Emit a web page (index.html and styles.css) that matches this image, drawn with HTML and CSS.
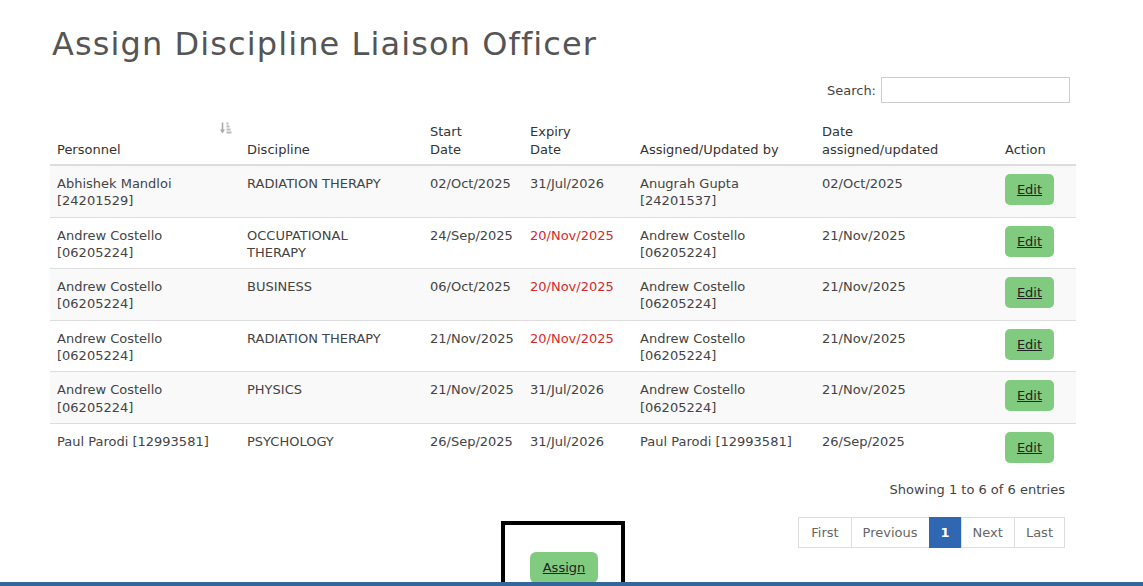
FILE: index.html
```html
<!DOCTYPE html>
<html lang="en">
<head>
  <meta charset="UTF-8">
  <title>Assign Discipline Liaison Officer</title>
  <link rel="stylesheet" href="styles.css">
</head>
<body>
  <div class="page">
    <h1 class="page-title">Assign Discipline Liaison Officer</h1>

    <div class="table-tools">
      <label class="search">Search: <input type="search" class="search-input"></label>
    </div>

    <table class="liaison-table">
      <thead>
        <tr>
          <th class="col-personnel sortable">Personnel
            <svg class="sort-icon" width="12" height="12" viewBox="0 0 12 12">
              <path d="M2.5 0.5v9" stroke="#aaa" stroke-width="1.6" fill="none"/>
              <path d="M0 7.5l2.5 4 2.5-4z" fill="#aaa"/>
              <rect x="6.5" y="0.5" width="2" height="2" fill="#bbb"/>
              <rect x="6.5" y="3.5" width="3" height="2" fill="#bbb"/>
              <rect x="6.5" y="6.5" width="4" height="2" fill="#bbb"/>
              <rect x="6.5" y="9.5" width="5" height="2" fill="#bbb"/>
            </svg>
          </th>
          <th class="col-discipline">Discipline</th>
          <th class="col-start">Start<br>Date</th>
          <th class="col-expiry">Expiry<br>Date</th>
          <th class="col-by">Assigned/Updated by</th>
          <th class="col-updated">Date<br>assigned/updated</th>
          <th class="col-action">Action</th>
        </tr>
      </thead>
      <tbody>
        <tr>
          <td>Abhishek Mandloi<br>[24201529]</td>
          <td>RADIATION THERAPY</td>
          <td>02/Oct/2025</td>
          <td>31/Jul/2026</td>
          <td>Anugrah Gupta<br>[24201537]</td>
          <td>02/Oct/2025</td>
          <td><a href="#" class="btn-edit">Edit</a></td>
        </tr>
        <tr>
          <td>Andrew Costello<br>[06205224]</td>
          <td>OCCUPATIONAL<br>THERAPY</td>
          <td>24/Sep/2025</td>
          <td class="expired">20/Nov/2025</td>
          <td>Andrew Costello<br>[06205224]</td>
          <td>21/Nov/2025</td>
          <td><a href="#" class="btn-edit">Edit</a></td>
        </tr>
        <tr>
          <td>Andrew Costello<br>[06205224]</td>
          <td>BUSINESS</td>
          <td>06/Oct/2025</td>
          <td class="expired">20/Nov/2025</td>
          <td>Andrew Costello<br>[06205224]</td>
          <td>21/Nov/2025</td>
          <td><a href="#" class="btn-edit">Edit</a></td>
        </tr>
        <tr>
          <td>Andrew Costello<br>[06205224]</td>
          <td>RADIATION THERAPY</td>
          <td>21/Nov/2025</td>
          <td class="expired">20/Nov/2025</td>
          <td>Andrew Costello<br>[06205224]</td>
          <td>21/Nov/2025</td>
          <td><a href="#" class="btn-edit">Edit</a></td>
        </tr>
        <tr>
          <td>Andrew Costello<br>[06205224]</td>
          <td>PHYSICS</td>
          <td>21/Nov/2025</td>
          <td>31/Jul/2026</td>
          <td>Andrew Costello<br>[06205224]</td>
          <td>21/Nov/2025</td>
          <td><a href="#" class="btn-edit">Edit</a></td>
        </tr>
        <tr>
          <td>Paul Parodi [12993581]</td>
          <td>PSYCHOLOGY</td>
          <td>26/Sep/2025</td>
          <td>31/Jul/2026</td>
          <td>Paul Parodi [12993581]</td>
          <td>26/Sep/2025</td>
          <td><a href="#" class="btn-edit">Edit</a></td>
        </tr>
      </tbody>
    </table>

    <div class="table-info">Showing 1 to 6 of 6 entries</div>

    <div class="table-footer">
      <div></div>
      <div class="assign-box">
        <a href="#" class="btn-assign">Assign</a>
      </div>
      <ul class="pagination">
        <li><a href="#">First</a></li>
        <li><a href="#">Previous</a></li>
        <li class="active"><a href="#">1</a></li>
        <li><a href="#">Next</a></li>
        <li><a href="#">Last</a></li>
      </ul>
    </div>
  </div>

  <div class="footer-bar"></div>
</body>
</html>
```

FILE: styles.css
```css
* {
  box-sizing: border-box;
}

body {
  margin: 0;
  background: #fff;
  font-family: "DejaVu Sans", sans-serif;
  font-size: 13px;
  color: #444;
  overflow: hidden;
}

.page {
  width: 1026px;
  margin-left: 50px;
  padding-top: 22px;
}

.page-title {
  margin: 0 0 0 2px;
  font-size: 32px;
  font-weight: normal;
  line-height: 44px;
  color: #555;
  letter-spacing: 1.1px;
}

.table-tools {
  display: flex;
  justify-content: flex-end;
  padding-right: 6px;
  margin-top: 11px;
}

.search {
  display: flex;
  align-items: center;
  gap: 5px;
  color: #444;
}

.search-input {
  width: 189px;
  height: 26px;
  border: 1px solid #ccc;
  padding: 2px 4px;
  font: inherit;
}

.liaison-table {
  width: 100%;
  border-collapse: collapse;
  margin-top: 9px;
}

.liaison-table th,
.liaison-table td {
  padding: 9px 7px 7px;
  line-height: 17.3px;
  text-align: left;
  vertical-align: top;
}

.liaison-table th {
  padding-top: 11px;
  padding-bottom: 5px;
  line-height: 18px;
  vertical-align: bottom;
  font-weight: normal;
  color: #333;
  border-bottom: 2px solid #ddd;
}

.liaison-table td {
  border-top: 1px solid #ddd;
}

.liaison-table tbody tr:first-child td {
  border-top: none;
}

.liaison-table tbody tr:nth-child(odd) {
  background: #f9f9f9;
}

.sortable {
  position: relative;
}

.sort-icon {
  position: absolute;
  top: 10px;
  right: 8px;
}

.col-personnel { width: 190px; }
.col-discipline { width: 183px; }
.col-start { width: 100px; }
.col-expiry { width: 110px; }
.col-by { width: 182px; }
.col-updated { width: 183px; }
.col-action { width: 78px; }

.expired {
  color: #d42a2a;
}

.btn-edit {
  display: inline-block;
  width: 49px;
  height: 31px;
  margin-top: -1px;
  line-height: 31px;
  text-align: center;
  background: #80cb80;
  color: #222;
  border-radius: 5px;
  text-decoration: underline;
}

.table-info {
  text-align: right;
  padding: 11px 11px 0 0;
  line-height: 18px;
  color: #444;
}

.table-footer {
  display: grid;
  grid-template-columns: 1fr auto 1fr;
  align-items: start;
  margin-top: 18px;
}

.assign-box {
  width: 124px;
  height: 70px;
  margin-top: 4px;
  border: 4px solid #000;
  padding: 27px 0 0 25px;
}

.btn-assign {
  display: inline-block;
  width: 68px;
  height: 31px;
  line-height: 31px;
  text-align: center;
  background: #80cb80;
  color: #222;
  border-radius: 6px;
  text-decoration: underline;
}

.pagination {
  justify-self: end;
  display: flex;
  list-style: none;
  margin: 0 11px 0 0;
  padding: 0;
}

.pagination li a {
  display: block;
  height: 31px;
  line-height: 29px;
  padding: 0 11px;
  border: 1px solid #ddd;
  margin-left: -1px;
  color: #666;
  text-decoration: none;
}

.pagination li:first-child a {
  padding: 0 12px;
}

.pagination li.active a {
  background: #2f67b3;
  border-color: #2f67b3;
  color: #fff;
  font-weight: bold;
}

.footer-bar {
  position: fixed;
  left: 0;
  right: 0;
  bottom: 0;
  height: 4px;
  background: #336699;
}
```
